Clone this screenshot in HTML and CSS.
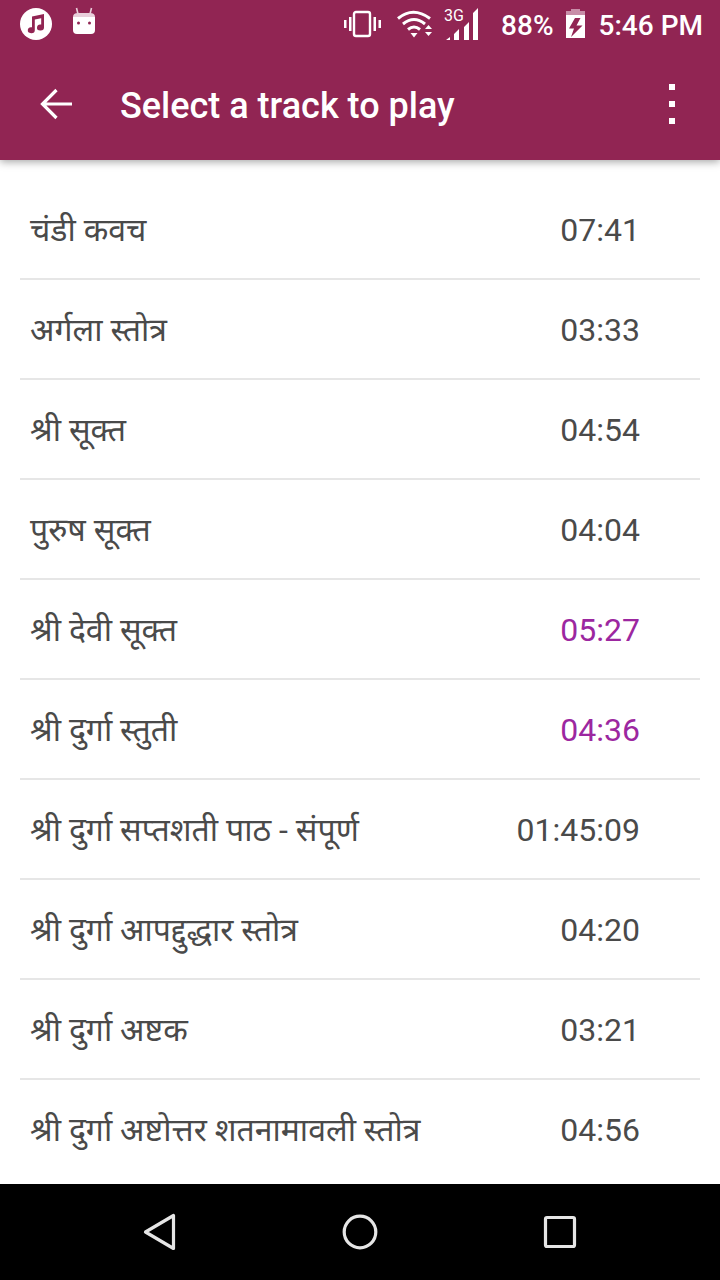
FILE: index.html
```html
<!DOCTYPE html>
<html lang="hi">
<head>
<meta charset="utf-8">
<title>Select a track to play</title>
<link rel="stylesheet" href="styles.css">
</head>
<body>
<div class="screen">
  <header class="appbar">
    <div class="status">
      <div class="status-left">
        <svg class="ic-music" width="32" height="32" viewBox="0 0 32 32"><circle cx="16" cy="16" r="16" fill="#fff"/><path d="M12 8.500l12-2.500v13.500a3.500 3 0 1 1-2.800-2.900V10.200l-6.400 1.400v10.600a3.500 3 0 1 1-2.800-2.900z" fill="#912553"/></svg>
        <svg class="ic-android" width="24" height="30" viewBox="0 0 24 30"><path d="M4.500 1l1.500 6M19.500 1l-1.500 6" stroke="#e9cfdb" stroke-width="1.600" fill="none"/><path d="M1 10q0-4 5-4h12q5 0 5 4z" fill="#e9cfdb"/><path d="M1 10h22v13q0 4-4 4H5q-4 0-4-4z" fill="#fff"/><circle cx="6.500" cy="16" r="1.500" fill="#912553"/><circle cx="17.500" cy="16" r="1.500" fill="#912553"/></svg>
      </div>
      <div class="status-right">
        <svg class="ic-vib" width="37" height="28" viewBox="0 0 37 28"><rect x="10" y="2" width="16" height="24" rx="2" fill="none" stroke="#fff" stroke-width="2.400"/><path d="M5 7h2.500v14H5zM0 10h2.500v8H0zM29.500 7H32v14h-2.500zM34.500 10H37v8h-2.500z" fill="#fff"/></svg>
        <svg class="ic-wifi" width="36" height="30" viewBox="0 0 36 30"><path d="M1 9.500Q16-3 33 9.500M6 15Q17 6 28 15M11 20.500q6-5 12 0" fill="none" stroke="#fff" stroke-width="3"/><path d="M13.500 24h7L17 28.500zM28 20l3.500-4 3.500 4zM28 23h7l-3.500 4z" fill="#fff"/></svg>
        <div class="signal">
          <span class="net">3G</span>
          <svg width="32" height="32" viewBox="0 0 32 32"><path d="M0 32h4v-3l-4 3zM8 32h5V21l-5 5zM18 32h5V14l-5 5zM27 32h5V0l-5 5z" fill="#fff"/></svg>
        </div>
        <span class="pct">88%</span>
        <svg class="ic-batt" width="19" height="30" viewBox="0 0 19 30"><path d="M5 0h9v2h5v4H0V2h5z" fill="#c88ea8"/><path d="M0 6h19v23H0z" fill="#fff"/><path d="M9 9h5.500l-4 7.500h6L5 28l3-8.500H3z" fill="#912553"/></svg>
        <span class="clock">5:46 PM</span>
      </div>
    </div>
    <div class="toolbar">
      <svg class="ic-back" width="32" height="32" viewBox="0 0 32 32"><path d="M32 16H3M16.500 2L2.500 16l14 14" fill="none" stroke="#fff" stroke-width="3.200"/></svg>
      <h1 class="title">Select a track to play</h1>
      <div class="more"><i></i><i></i><i></i></div>
    </div>
  </header>
  <main class="list">
    <div class="row"><span class="name">चंडी कवच</span><span class="dur">07:41</span></div>
    <div class="row"><span class="name">अर्गला स्तोत्र</span><span class="dur">03:33</span></div>
    <div class="row"><span class="name">श्री सूक्त</span><span class="dur">04:54</span></div>
    <div class="row"><span class="name">पुरुष सूक्त</span><span class="dur">04:04</span></div>
    <div class="row"><span class="name">श्री देवी सूक्त</span><span class="dur played">05:27</span></div>
    <div class="row"><span class="name">श्री दुर्गा स्तुती</span><span class="dur played">04:36</span></div>
    <div class="row"><span class="name">श्री दुर्गा सप्तशती पाठ - संपूर्ण</span><span class="dur">01:45:09</span></div>
    <div class="row"><span class="name">श्री दुर्गा आपद्दुद्धार स्तोत्र</span><span class="dur">04:20</span></div>
    <div class="row"><span class="name">श्री दुर्गा अष्टक</span><span class="dur">03:21</span></div>
    <div class="row"><span class="name">श्री दुर्गा अष्टोत्तर शतनामावली स्तोत्र</span><span class="dur">04:56</span></div>
  </main>
  <nav class="navbar">
    <svg width="34" height="38" viewBox="0 0 34 38"><path d="M30.500 2.500v33L2.500 19z" fill="none" stroke="#e6e6e6" stroke-width="3.200" stroke-linejoin="round"/></svg>
    <svg width="36" height="36" viewBox="0 0 36 36"><circle cx="18" cy="18" r="15.800" fill="none" stroke="#e6e6e6" stroke-width="3.200"/></svg>
    <svg width="34" height="34" viewBox="0 0 34 34"><rect x="2.500" y="2.500" width="29" height="29" rx="1.500" fill="none" stroke="#e6e6e6" stroke-width="3.200"/></svg>
  </nav>
</div>
</body>
</html>
```
FILE: styles.css
```css
* { box-sizing: border-box; }
html, body { margin: 0; padding: 0; background: #fff; }
.screen {
  width: 720px;
  height: 1280px;
  display: flex;
  flex-direction: column;
  overflow: hidden;
  font-family: Roboto, "Noto Sans", "Noto Sans Devanagari", sans-serif;
}
.appbar {
  height: 160px;
  flex: none;
  background: #912553;
  color: #fff;
  box-shadow: 0 2px 8px rgba(0, 0, 0, 0.35);
  position: relative;
  z-index: 1;
}
.status {
  height: 48px;
  display: flex;
  align-items: center;
  justify-content: space-between;
  padding: 0 17px 0 20px;
}
.status-left { display: flex; align-items: center; gap: 20px; }
.ic-android { margin-bottom: 4px; }
.status-right { display: flex; align-items: center; }
.ic-vib { margin-right: 16px; }
.ic-wifi { margin-right: 13px; }
.signal { position: relative; width: 32px; height: 32px; margin-right: 23px; }
.net { position: absolute; left: -2px; top: -1px; font-size: 16px; line-height: 17px; }
.signal svg { display: block; }
.pct, .clock { font-size: 28px; font-weight: 500; line-height: 32px; padding-top: 3px; }
.pct { margin-right: 12px; }
.ic-batt { margin-right: 14px; }
.toolbar { height: 112px; display: flex; align-items: center; }
.ic-back { margin-left: 40px; flex: none; }
.title {
  margin: 4px 0 0 48px;
  flex: 1;
  font-size: 36px;
  font-weight: 500;
  line-height: 40px;
}
.more { width: 6px; margin-right: 45px; display: flex; flex-direction: column; gap: 11px; }
.more i { display: block; width: 6px; height: 6px; background: #fff; }
.list { flex: 1; min-height: 0; padding: 20px 20px 0; overflow: hidden; }
.row {
  height: 100px;
  display: flex;
  align-items: center;
  justify-content: space-between;
  padding: 0 60px 0 10px;
  border-bottom: 2px solid #e6e6e6;
  color: #4a4a4a;
  font-size: 32px;
}
.row:last-child { border-bottom-color: transparent; }
.name { padding-bottom: 2px; }
.dur { padding-top: 2px; }
.played { color: #9c27a0; }
.navbar {
  height: 96px;
  flex: none;
  background: #000;
  display: flex;
  align-items: center;
  justify-content: space-between;
  padding: 0 143px;
}
```
